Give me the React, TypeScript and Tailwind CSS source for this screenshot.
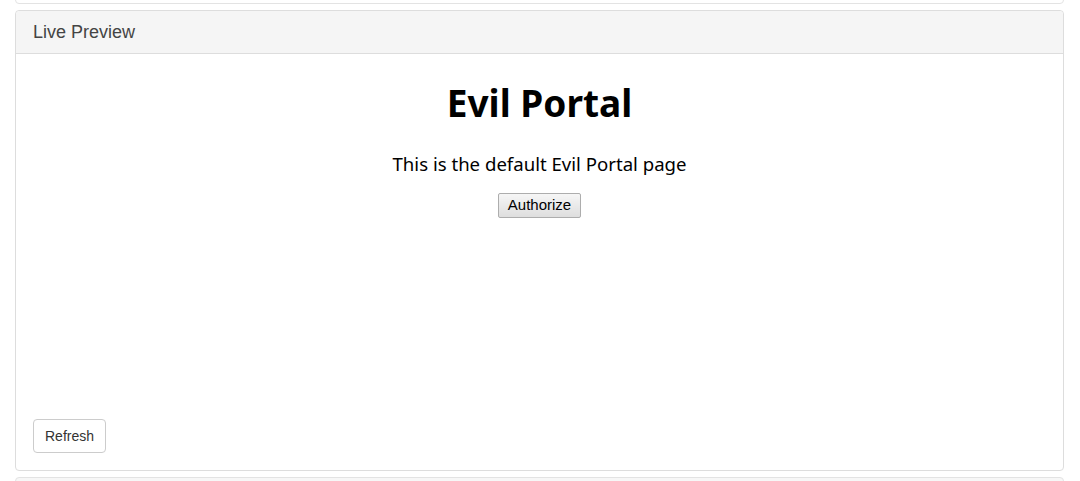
import React from 'react';

export default function App() {
  return (
    <div className="w-[1080px] h-[481px] overflow-hidden bg-white font-['Liberation_Sans',Arial,sans-serif] text-[#333]">
      <div className="ml-[15px] mr-[16px] -mt-[20px] h-[24px] rounded border border-[#e3e3e3] bg-white" />
      <div className="ml-[15px] mr-[16px] mt-[6px] rounded border border-[#dddddd] bg-white">
        <div className="h-[43px] flex items-center px-[17px] pt-[1px] bg-[#f5f5f5] border-b border-[#dddddd] rounded-t text-[18px] text-[#444]">
          Live Preview
        </div>
        <div className="h-[416px] flex flex-col">
          <div className="flex flex-col items-center pt-[27px] font-['Noto_Sans',sans-serif] text-black">
            <h1 className="text-[37px] font-bold leading-[44px]">Evil Portal</h1>
            <p className="mt-[26px] text-[18.6px] leading-[26px]">This is the default Evil Portal page</p>
            <button className="mt-[16px] h-[25px] px-[9px] border border-[#adadad] rounded-[2px] bg-gradient-to-b from-[#f6f6f6] to-[#dedede] text-[15px] font-['Liberation_Sans',Arial,sans-serif] text-black">
              Authorize
            </button>
          </div>
          <div className="mt-auto px-[17px] pb-[17px]">
            <button className="h-[34px] px-[11px] border border-[#cccccc] rounded bg-white text-[14px] text-[#333]">
              Refresh
            </button>
          </div>
        </div>
      </div>
      <div className="ml-[15px] mr-[16px] mt-[6px] h-[30px] rounded border border-[#e3e3e3] bg-[#f7f7f7]" />
    </div>
  );
}
